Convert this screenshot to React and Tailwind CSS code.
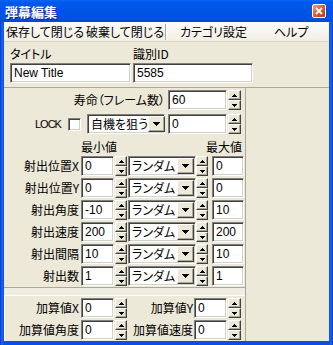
const JP = "font-['MS_UI_Gothic','Noto_Sans_CJK_JP',sans-serif] [font-feature-settings:'palt']";

function TextBox({ value, w, className = '' }) {
  return (
    <div
      className={`h-[20px] bg-white border-t border-l border-t-[#808080] border-l-[#808080] border-b border-r border-b-white border-r-white shadow-[inset_1px_1px_0_#404040,inset_-1px_-1px_0_#d4d0c8] flex items-center pl-[3px] text-[12px] leading-none text-black font-['Liberation_Sans',sans-serif] ${w} ${className}`}
    >
      {value}
    </div>
  );
}

function Arrow({ up }) {
  return up ? (
    <svg width="5" height="3" viewBox="0 0 5 3">
      <path d="M2 0h1v1h1v1h1v1H0V2h1V1h1z" fill="#000" />
    </svg>
  ) : (
    <svg width="5" height="3" viewBox="0 0 5 3">
      <path d="M0 0h5v1H4v1H3v1H2V2H1V1H0z" fill="#000" />
    </svg>
  );
}

function SpinHalf({ up }) {
  return (
    <div className="h-[10px] bg-[#ece9d8] border-t border-l border-t-white border-l-white border-b border-r border-b-[#404040] border-r-[#404040] shadow-[inset_-1px_-1px_0_#aca899] flex items-center justify-center">
      <Arrow up={up} />
    </div>
  );
}

function Spin({ w = 'w-[12px]', className = '' }) {
  return (
    <div className={`flex flex-col h-[20px] ${w} ${className}`}>
      <SpinHalf up />
      <SpinHalf />
    </div>
  );
}

function Combo({ value, w, className = '' }) {
  return (
    <div
      className={`h-[20px] bg-white border-t border-l border-t-[#808080] border-l-[#808080] border-b border-r border-b-white border-r-white shadow-[inset_1px_1px_0_#404040,inset_-1px_-1px_0_#d4d0c8] flex items-center ${w} ${className}`}
    >
      <span className={`flex-1 pl-[3px] text-[12px] leading-[16px] text-black whitespace-nowrap ${JP}`}>{value}</span>
      <div className="w-[17px] h-[16px] mr-[1px] shrink-0 bg-[#ece9d8] border-t border-l border-t-white border-l-white border-b border-r border-b-[#404040] border-r-[#404040] shadow-[inset_-1px_-1px_0_#aca899] flex items-center justify-center">
        <svg width="7" height="4" viewBox="0 0 7 4">
          <path d="M0 0h7v1H6v1H5v1H4v1H3V3H2V2H1V1H0z" fill="#000" />
        </svg>
      </div>
    </div>
  );
}

function Label({ children, w }) {
  return (
    <div className={`${w} shrink-0 text-right text-[12px] leading-[16px] text-black whitespace-nowrap ${JP}`}>{children}</div>
  );
}

const ROWS = [
  ['射出位置X', '0', '0'],
  ['射出位置Y', '0', '0'],
  ['射出角度', '-10', '10'],
  ['射出速度', '200', '200'],
  ['射出間隔', '10', '10'],
  ['射出数', '1', '1'],
];

export default function App() {
  return (
    <div className="w-[333px] h-[345px] flex flex-col bg-[linear-gradient(to_right,#0831d9,#166aee_2px,#0a4fe0_4px,#0a4fe0_calc(100%-4px),#166aee_calc(100%-2px),#0831d9)] overflow-hidden">
      {/* title bar */}
      <div className="h-[22px] shrink-0 flex items-center justify-between pl-[5px] pr-[7px] bg-[linear-gradient(to_bottom,#0a68f4_0%,#0058ee_12%,#0054e3_50%,#0052e0_85%,#0046cf_100%)]">
        <span className={`text-white font-bold text-[13px] leading-none [text-shadow:1px_1px_0_#0a1e8c] ${JP}`}>弾幕編集</span>
        <div className="w-[14px] h-[14px] rounded-[2px] border border-white bg-[linear-gradient(135deg,#f0a080,#e05a30_50%,#c03a10)] flex items-center justify-center">
          <svg width="8" height="8" viewBox="0 0 8 8">
            <path d="M1 1l6 6M7 1L1 7" stroke="#fff" strokeWidth="1.8" />
          </svg>
        </div>
      </div>

      {/* client */}
      <div className="flex-1 mx-[4px] mb-[4px] bg-[#ece9d8] flex flex-col">
        {/* menu */}
        <div className={`h-[20px] shrink-0 flex items-center text-[12px] leading-none text-black bg-[linear-gradient(to_bottom,#fbfbf9,#f1efe4)] border-b border-b-[#d8d5c5] ${JP}`}>
          <span className="ml-[2px] w-[80px]">保存して閉じる</span>
          <span className="w-[79px]">破棄して閉じる</span>
          <div className="h-[16px] w-[2px] border-l border-l-[#aca899] border-r border-r-white" />
          <span className="ml-[13px] w-[94px]">カテゴリ設定</span>
          <span>ヘルプ</span>
        </div>

        {/* title / id */}
        <div className="h-[45px] shrink-0 flex pl-[6px] gap-[3px]">
          <div className="flex flex-col w-[120px]">
            <div className={`h-[21px] flex items-center text-[12px] leading-none pt-[2px] ${JP}`}>タイトル</div>
            <TextBox value="New Title" w="w-[121px]" />
          </div>
          <div className="flex flex-col w-[120px]">
            <div className={`h-[21px] flex items-center text-[12px] leading-none pt-[2px] ${JP}`}>識別ID</div>
            <TextBox value="5585" w="w-[120px]" />
          </div>
        </div>

        {/* panel area */}
        <div className="flex-1 flex border-t border-t-[#aca899]">
          <div className="w-[242px] flex flex-col border-r border-r-[#aca899]">
            <div className="h-[23px] flex items-center pt-[1px]">
              <Label w="w-[161px]">寿命（フレーム数）</Label>
              <TextBox value="60" w="w-[59px]" className="ml-[3px]" />
              <Spin w="w-[13px]" className="ml-[1px]" />
            </div>
            <div className="h-[24px] flex items-center pt-[2px]">
              <span className="ml-[31px] w-[27px] shrink-0 text-[11px] leading-none font-['Liberation_Sans',sans-serif] tracking-[-1px]">LOCK</span>
              <div className="ml-[6px] w-[13px] h-[13px] shrink-0 bg-white border-t border-l border-t-[#808080] border-l-[#808080] border-b border-r border-b-white border-r-white shadow-[inset_1px_1px_0_#404040,inset_-1px_-1px_0_#d4d0c8]" />
              <Combo value="自機を狙う" w="w-[78px]" className="ml-[6px]" />
              <TextBox value="0" w="w-[59px]" className="ml-[3px]" />
              <Spin w="w-[13px]" className="ml-[1px]" />
            </div>
            <div className={`h-[20px] flex items-end text-[12px] leading-none pb-[2px] ${JP}`}>
              <span className="ml-[77px]">最小値</span>
              <span className="ml-[89px]">最大値</span>
            </div>
            <div className="flex flex-col gap-[2px] pt-[1px]">
              {ROWS.map(([label, min, max]) => (
                <div key={label} className="h-[20px] flex items-center">
                  <Label w="w-[75px]">{label}</Label>
                  <TextBox value={min} w="w-[33px]" className="ml-[2px]" />
                  <Spin className="ml-[1px]" />
                  <Combo value="ランダム" w="w-[68px]" className="ml-[1px]" />
                  <Spin />
                  <TextBox value={max} w="w-[32px]" className="ml-[4px]" />
                </div>
              ))}
            </div>
            <div className="h-[9px] mt-[1px] border-t border-t-[#aca899] border-b border-b-white bg-[#f0eee2]" />
            <div className="flex-1 flex flex-col gap-[2px] pt-[2px] border-l border-l-white">
              <div className="h-[20px] flex items-center">
                <Label w="w-[74px]">加算値X</Label>
                <TextBox value="0" w="w-[33px]" className="ml-[2px]" />
                <Spin className="ml-[1px]" />
                <Label w="w-[66px]">加算値Y</Label>
                <TextBox value="0" w="w-[33px]" className="ml-[1px]" />
                <Spin w="w-[13px]" className="ml-[1px]" />
              </div>
              <div className="h-[20px] flex items-center">
                <Label w="w-[74px]">加算値角度</Label>
                <TextBox value="0" w="w-[33px]" className="ml-[2px]" />
                <Spin className="ml-[1px]" />
                <Label w="w-[66px]">加算値速度</Label>
                <TextBox value="0" w="w-[33px]" className="ml-[1px]" />
                <Spin w="w-[13px]" className="ml-[1px]" />
              </div>
            </div>
          </div>
          <div className="flex-1" />
        </div>
      </div>
    </div>
  );
}
